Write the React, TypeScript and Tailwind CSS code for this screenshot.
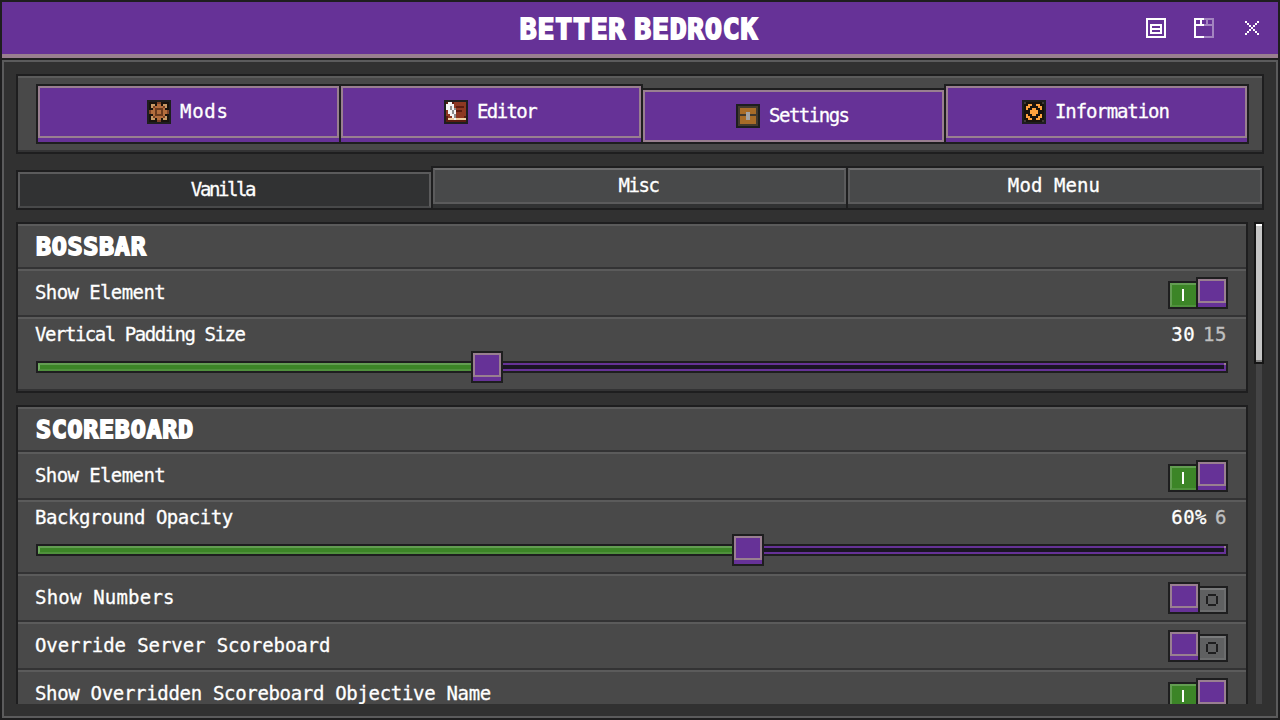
import React from "react";

const PALETTE: Record<string, string> = {
  K: "#19130d",
  T: "#c79a66",
  B: "#7d4227",
  G: "#b26d3d",
  D: "#6a3a1e",
  W: "#f4f4f4",
  g: "#8d8d8d",
  R: "#8e3822",
  r: "#5c1c10",
  C: "#f0cfa4",
  c: "#433a2e",
  O: "#a86c28",
  L: "#a3a3a3",
  s: "#3f3a36",
  A: "#ffa23e",
};

const GEAR = [
  "KKKKBBKKKK",
  "KTTKGGKTTK",
  "KTBGGGGBTK",
  "KKGDDDDGKK",
  "BGGDGGDGGB",
  "BGGDGGDGGB",
  "KKGDDDDGKK",
  "KTBGGGGBTK",
  "KTTKGGKTTK",
  "KKKKBBKKKK",
];
const BOOK = [
  "rWWrRRRRRR",
  "WWWWRRRRRR",
  "WWgWRrrrrR",
  "WWgWgRRRRR",
  "RWWgWrrrRR",
  "RWWgWRRRRR",
  "RRWWgRRRRR",
  "rRRWgRRRRr",
  "rCCCWCCCCC",
  "rrrrrrrrrr",
];
const CHEST = [
  "cccccccccc",
  "cOOOOOOOOc",
  "cOOOOOOOOc",
  "cOOOLLOOOc",
  "ccccLLcccc",
  "cOOOLLOOOc",
  "cOOOLLOOOc",
  "cOOOOOOOOc",
  "cOOOOOOOOc",
  "cccccccccc",
];
const INFO = [
  "sKKKKKKKKs",
  "KKAAKKAAKK",
  "KAAKKKKAAK",
  "KAKKAAKKAK",
  "KKKAAAAKKK",
  "KKKAAAAKKK",
  "KAKKAAKKAK",
  "KAAKKKKAAK",
  "KKAAKKAAKK",
  "sKKKKKKKKs",
];

function PixelIcon({ rows }: { rows: string[] }) {
  return (
    <svg className="size-6 shrink-0 border-2 border-[#1e1e1f]" viewBox="0 0 10 10" shapeRendering="crispEdges">
      {rows.flatMap((row, y) =>
        row.split("").map((c, x) => <rect key={`${x}-${y}`} x={x} y={y} width="1" height="1" fill={PALETTE[c]} />),
      )}
    </svg>
  );
}

function MainTab({ label, icon, width, text, active }: { label: string; icon: string[]; width: string; text: string; active?: boolean }) {
  return (
    <div className={`${width} ${active ? "mt-1 h-14" : "h-15 pb-1"} -ml-0.5 shrink-0 border-2 border-[#1e1e1f] bg-[#663297]`}>
      <div className="flex h-full items-center justify-center gap-2 border-2 border-[#997f90]">
        <PixelIcon rows={icon} />
        <span className={`${text} pb-0.5 pl-px whitespace-nowrap`}>{label}</span>
      </div>
    </div>
  );
}

function SubTab({ label, width, text, active }: { label: string; width: string; text: string; active?: boolean }) {
  return active ? (
    <div className={`${width} mt-1 h-10 shrink-0 border-2 border-[#1e1e1f]`}>
      <div className="flex h-full items-center justify-center border-2 border-[#5b5b5c] border-b-[#48494a] bg-[#313233]">
        <span className={`${text} pr-1 pb-0.5 whitespace-nowrap`}>{label}</span>
      </div>
    </div>
  ) : (
    <div className={`${width} -ml-0.5 h-11 shrink-0 border-2 border-[#1e1e1f] bg-[#313233] pb-1`}>
      <div className="flex h-full items-center justify-center border-2 border-[#5b5b5c] border-t-[#6d6d6e] bg-[#48494a]">
        <span className={`${text} pr-0.5 pb-0.5 whitespace-nowrap`}>{label}</span>
      </div>
    </div>
  );
}

function Knob() {
  return (
    <div className="size-8 shrink-0 border-2 border-[#1e1e1f] bg-[#663297] pb-1">
      <div className="h-full border-2 border-[#997f90]" />
    </div>
  );
}

function Toggle({ on }: { on?: boolean }) {
  return on ? (
    <div className="flex w-[60px] items-end">
      <div className="flex h-7 w-7 items-center border-2 border-r-0 border-[#1e1e1f]">
        <div className="flex h-full w-full items-center border-y-2 border-l-2 border-t-[#639d52] border-b-[#4f913c] border-l-[#639d52] bg-[#3c8527] pl-2.5">
          <div className="h-3 w-0.5 bg-white" />
        </div>
      </div>
      <Knob />
    </div>
  ) : (
    <div className="flex w-[60px] items-end">
      <Knob />
      <div className="h-7 w-7 border-2 border-l-0 border-[#1e1e1f]">
        <div className="flex h-full items-center border-y-2 border-r-2 border-[#6c6d6e] border-t-[#7a7b7c] bg-[#5f6061] pl-1.5">
          <svg className="size-3" viewBox="0 0 6 6" shapeRendering="crispEdges">
            <path fill="#1e1e1f" d="M1 0h4v1H1zM1 5h4v1H1zM0 1h1v4H0zM5 1h1v4H5z" />
          </svg>
        </div>
      </div>
    </div>
  );
}

const ROW = "border-t-2 border-[#5b5b5b] bg-[#494949]";

function SectionHeader({ title }: { title: string }) {
  return (
    <div className={`${ROW} flex h-[43px] items-center pl-[18px]`}>
      <h2 className="text-[25px] leading-7 font-bold tracking-[0.72px] [-webkit-text-stroke:1.8px_white]">{title}</h2>
    </div>
  );
}

function ToggleRow({ label, text, on }: { label: string; text: string; on?: boolean }) {
  return (
    <div className={`${ROW} flex h-[46px] shrink-0 items-start justify-between pt-1.5 pr-[18px] pl-[17px]`}>
      <span className={`${text} pt-[3px] whitespace-nowrap`}>{label}</span>
      <Toggle on={on} />
    </div>
  );
}

function SliderRow({ label, text, value, fallback, fill }: { label: string; text: string; value: string; fallback: string; fill: string }) {
  return (
    <div className={`${ROW} h-[72px] pr-[18px] pl-[18px]`}>
      <div className="-ml-px flex h-8 items-start justify-between pt-[3px]">
        <span className={`${text} whitespace-nowrap`}>{label}</span>
        <span className="mr-px flex gap-2 tracking-[0.5px]">
          <span>{value}</span>
          <span className="text-[#c0c0c0] [-webkit-text-stroke:0.3px_#c0c0c0]">{fallback}</span>
        </span>
      </div>
      <div className="flex items-center">
        <div className={`${fill} h-3 shrink-0 border-2 border-r-0 border-[#1e1e1f]`}>
          <div className="h-full border-y-2 border-l-2 border-t-[#639d52] border-b-[#4f913c] border-l-[#72ab62] bg-[#3c8527]" />
        </div>
        <Knob />
        <div className="h-3 grow border-2 border-l-0 border-[#1e1e1f]">
          <div className="flex h-full justify-end border-y-2 border-[#663297] bg-[#1a1524]">
            <div className="-mt-0.5 h-1.5 w-0.5 border-t-2 border-[#997f90] bg-[#663297]" />
          </div>
        </div>
      </div>
    </div>
  );
}

const SECTION = "flex shrink-0 flex-col gap-0.5 border-2 border-[#1e1e1f] bg-[#333334] pb-0.5";

export default function App() {
  return (
    <div className="flex h-[720px] w-[1280px] flex-col overflow-hidden border-2 border-[#1e1e1f] bg-[#1e1e1f] font-['DejaVu_Sans_Mono',monospace] text-[19px] leading-6 text-white [-webkit-text-stroke:0.3px_white]">
      <header className="flex h-14 shrink-0 items-center border-b-4 border-[#997f90] bg-[#663297]">
        <div className="w-[200px]" />
        <h1 className="grow pt-[3px] pr-0.5 text-center text-[28px] leading-8 font-bold tracking-[0.85px] [word-spacing:-9.5px] [-webkit-text-stroke:1.9px_white]">
          BETTER BEDROCK
        </h1>
        <div className="flex w-[200px] items-center justify-end gap-7 pr-4">
          <svg className="size-5" viewBox="0 0 10 10" fill="white" shapeRendering="crispEdges">
            <path fillRule="evenodd" d="M0 0h10v10H0zM1 1v8h8V1zM2 3h6v5H2zM3 4v1h4V4zM3 6v1h4V6z" />
          </svg>
          <svg className="size-5" viewBox="0 0 10 10" fill="white" shapeRendering="crispEdges">
            <path d="M0 0h5v1H0zM0 1h1v9H0zM1 3h4v1H1zM3 1h1v2H3zM1 9h4v1H1z" />
            <path opacity=".4" d="M5 0h5v1H5zM9 1h1v9H9zM5 3h4v1H5zM6 1h1v2H6zM5 9h4v1H5z" />
          </svg>
          <svg className="size-5 p-[3px]" viewBox="0 0 7 7" fill="white" shapeRendering="crispEdges">
            <path d="M0 0h1v1H0zM6 0h1v1H6zM1 1h1v1H1zM5 1h1v1H5zM2 2h1v1H2zM4 2h1v1H4zM3 3h1v1H3zM2 4h1v1H2zM4 4h1v1H4zM1 5h1v1H1zM5 5h1v1H5zM0 6h1v1H0zM6 6h1v1H6z" />
          </svg>
        </div>
      </header>
      <main className="mt-0.5 flex min-h-0 grow flex-col border-2 border-[#5b5b5c] bg-[#313131] px-3 pt-3 pb-3">
        <nav className="h-20 shrink-0 border-2 border-[#1e1e1f] bg-[#494949]">
          <div className="flex h-full border-t-2 border-b-2 border-t-[#5b5b5b] border-b-[#333334] pt-1.5 pl-5">
            <MainTab label="Mods" icon={GEAR} width="w-[305px]" text="w-[51px] tracking-[0.7px]" />
            <MainTab label="Editor" icon={BOOK} width="w-[304px]" text="w-[62px] tracking-[-1.6px]" />
            <MainTab label="Settings" icon={CHEST} width="w-[305px]" text="w-[83px] tracking-[-1.5px]" active />
            <MainTab label="Information" icon={INFO} width="w-[305px]" text="w-[117px] tracking-[-1.1px]" />
          </div>
        </nav>
        <nav className="mt-3 flex h-11 shrink-0 items-start">
          <SubTab label="Vanilla" width="w-[417px]" text="tracking-[-2.4px]" active />
          <SubTab label="Misc" width="w-[417px]" text="tracking-[-1.4px]" />
          <SubTab label="Mod Menu" width="w-[418px]" text="tracking-[0.1px]" />
        </nav>
        <div className="mt-3 flex min-h-0 grow justify-between overflow-hidden">
          <div className="flex w-[1232px] flex-col gap-3 overflow-hidden">
            <section className={SECTION}>
              <SectionHeader title="BOSSBAR" />
              <ToggleRow label="Show Element" text="tracking-[-0.6px]" on />
              <SliderRow label="Vertical Padding Size" text="tracking-[-1.47px]" value="30" fallback="15" fill="w-[435px]" />
            </section>
            <section className={SECTION}>
              <SectionHeader title="SCOREBOARD" />
              <ToggleRow label="Show Element" text="tracking-[-0.6px]" on />
              <SliderRow label="Background Opacity" text="tracking-[-0.45px]" value="60%" fallback="6" fill="w-[696px]" />
              <ToggleRow label="Show Numbers" text="tracking-[0.2px]" />
              <ToggleRow label="Override Server Scoreboard" text="tracking-[-0.08px]" />
              <ToggleRow label="Show Overridden Scoreboard Objective Name" text="tracking-[-0.32px]" on />
            </section>
          </div>
          <div className="flex w-2.5 flex-col items-center">
            <div className="h-[142px] w-2.5 shrink-0 border-2 border-[#151515]">
              <div className="h-full border-y-2 border-t-white border-b-[#7d7d7d] bg-[#c6c6c6]" />
            </div>
            <div className="w-1.5 grow bg-[#444445]" />
          </div>
        </div>
      </main>
    </div>
  );
}
